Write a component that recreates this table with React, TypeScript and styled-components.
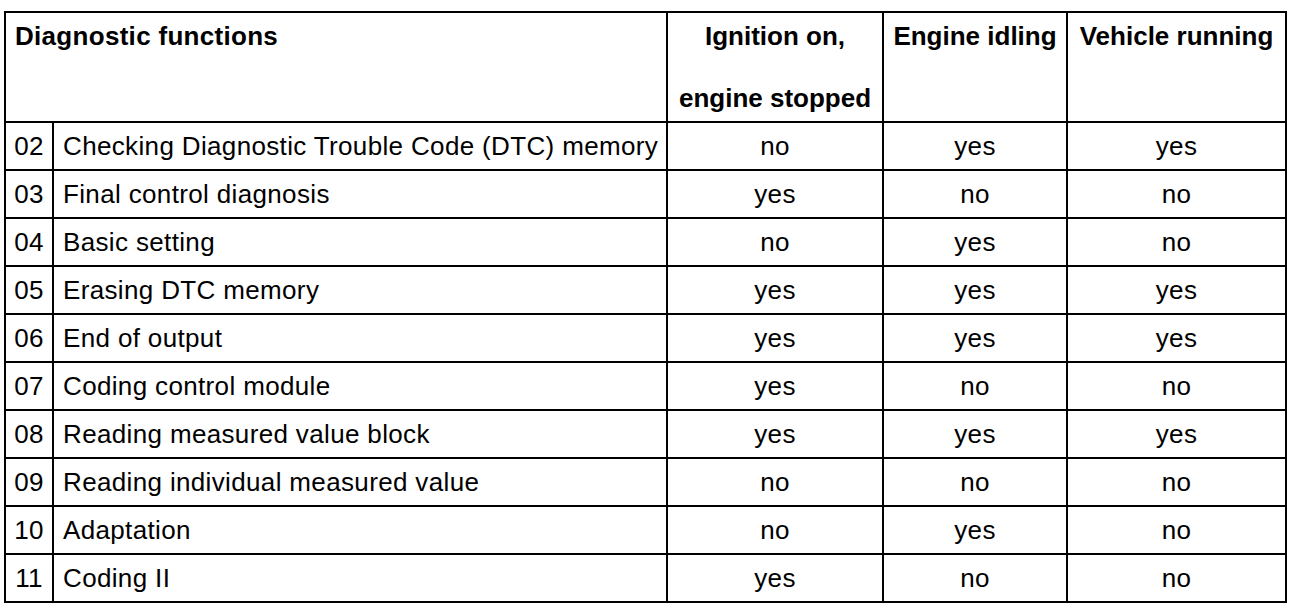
import React from "react";
import styled, { createGlobalStyle } from "styled-components";

const GlobalStyle = createGlobalStyle`
  html, body {
    margin: 0;
    padding: 0;
    background: #ffffff;
  }
  body {
    font-family: "Liberation Sans", Arial, sans-serif;
    color: #000000;
  }
`;

const Page = styled.div`
  padding: 11px 0 0 4px;
`;

const Table = styled.div`
  display: grid;
  grid-template-columns: 48px 614px 216px 184px 219px;
  grid-template-rows: 110px repeat(10, 48px);
  width: max-content;
  border-left: 2px solid #000;
  border-top: 2px solid #000;
  font-size: 26px;
`;

const Cell = styled.div<{ $align?: "left" | "center" }>`
  box-sizing: border-box;
  border-right: 2px solid #000;
  border-bottom: 2px solid #000;
  display: flex;
  align-items: center;
  justify-content: ${(p) => (p.$align === "left" ? "flex-start" : "center")};
  padding: ${(p) => (p.$align === "left" ? "0 0 0 9px" : "0")};
  line-height: 46px;
  letter-spacing: 0.35px;
  white-space: nowrap;
`;

const HeadCell = styled.div<{ $span?: number; $align?: "left" | "center" }>`
  box-sizing: border-box;
  grid-column: span ${(p) => p.$span ?? 1};
  border-right: 2px solid #000;
  border-bottom: 2px solid #000;
  display: flex;
  flex-direction: column;
  align-items: ${(p) => (p.$align === "left" ? "flex-start" : "center")};
  justify-content: flex-start;
  padding: ${(p) => (p.$align === "left" ? "0 0 0 9px" : "0")};
  font-weight: 700;
  letter-spacing: ${(p) => (p.$align === "left" ? "0.3px" : "0")};
  white-space: nowrap;
`;

const HeadLine = styled.span<{ $second?: boolean }>`
  display: block;
  line-height: 46px;
  margin-top: ${(p) => (p.$second ? "16px" : "0")};
`;

type Row = [string, string, string, string, string];

const rows: Row[] = [
  ["02", "Checking Diagnostic Trouble Code (DTC) memory", "no", "yes", "yes"],
  ["03", "Final control diagnosis", "yes", "no", "no"],
  ["04", "Basic setting", "no", "yes", "no"],
  ["05", "Erasing DTC memory", "yes", "yes", "yes"],
  ["06", "End of output", "yes", "yes", "yes"],
  ["07", "Coding control module", "yes", "no", "no"],
  ["08", "Reading measured value block", "yes", "yes", "yes"],
  ["09", "Reading individual measured value", "no", "no", "no"],
  ["10", "Adaptation", "no", "yes", "no"],
  ["11", "Coding II", "yes", "no", "no"],
];

export default function App() {
  return (
    <>
      <GlobalStyle />
      <Page>
        <Table>
          <HeadCell $span={2} $align="left">
            <HeadLine>Diagnostic functions</HeadLine>
          </HeadCell>
          <HeadCell>
            <HeadLine>Ignition on,</HeadLine>
            <HeadLine $second>engine stopped</HeadLine>
          </HeadCell>
          <HeadCell>
            <HeadLine>Engine idling</HeadLine>
          </HeadCell>
          <HeadCell>
            <HeadLine>Vehicle running</HeadLine>
          </HeadCell>
          {rows.map((r) => (
            <React.Fragment key={r[0]}>
              <Cell>{r[0]}</Cell>
              <Cell $align="left">{r[1]}</Cell>
              <Cell>{r[2]}</Cell>
              <Cell>{r[3]}</Cell>
              <Cell>{r[4]}</Cell>
            </React.Fragment>
          ))}
        </Table>
      </Page>
    </>
  );
}
